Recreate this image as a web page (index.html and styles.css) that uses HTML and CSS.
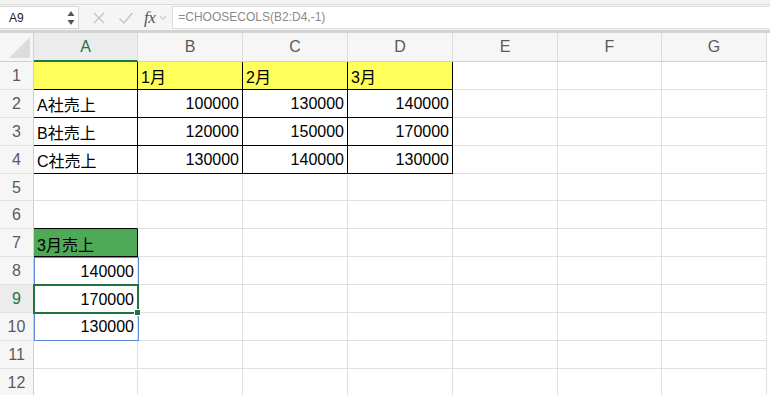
FILE: index.html
```html
<!DOCTYPE html>
<html lang="ja">
<head>
  <meta charset="UTF-8">
  <title>CHOOSECOLS</title>
  <link rel="stylesheet" href="styles.css">
</head>
<body>

  <!-- Toolbar strip -->
  <div class="top-strip"></div>

  <!-- Formula bar -->
  <div class="formula-bar">
    <div class="name-box">
      <span>A9</span>
      <svg class="spin" width="8" height="16" viewBox="0 0 8 16">
        <path d="M4 1 L7.5 6 L0.5 6 Z" fill="#555"/>
        <path d="M4 15 L7.5 10 L0.5 10 Z" fill="#555"/>
      </svg>
    </div>
    <svg class="fb-icon" width="14" height="14" viewBox="0 0 14 14">
      <path d="M2 2 L12 12 M12 2 L2 12" stroke="#c4c4c4" stroke-width="1.4" fill="none"/>
    </svg>
    <svg class="fb-icon" width="16" height="14" viewBox="0 0 16 14">
      <path d="M1.5 7.5 L6 12 L14.5 2" stroke="#c4c4c4" stroke-width="1.4" fill="none"/>
    </svg>
    <span class="fx">fx</span>
    <svg class="chev" width="8" height="6" viewBox="0 0 8 6">
      <path d="M1 1 L4 4.5 L7 1" stroke="#bbb" stroke-width="1" fill="none"/>
    </svg>
    <div class="formula-input">=CHOOSECOLS(B2:D4,-1)</div>
  </div>
  <div class="bar-sep"></div>

  <!-- Sheet -->
  <div class="sheet">
    <div class="row head-row">
      <div class="corner"><div class="tri"></div></div>
      <div class="col-head sel">A</div>
      <div class="col-head">B</div>
      <div class="col-head">C</div>
      <div class="col-head">D</div>
      <div class="col-head">E</div>
      <div class="col-head">F</div>
      <div class="col-head">G</div>
    </div>

    <div class="row">
      <div class="row-head">1</div>
      <div class="c b yellow"></div>
      <div class="c b yellow">1月</div>
      <div class="c b yellow">2月</div>
      <div class="c b yellow">3月</div>
      <div class="c"></div><div class="c"></div><div class="c"></div>
    </div>
    <div class="row">
      <div class="row-head">2</div>
      <div class="c b">A社売上</div>
      <div class="c b num">100000</div>
      <div class="c b num">130000</div>
      <div class="c b num">140000</div>
      <div class="c"></div><div class="c"></div><div class="c"></div>
    </div>
    <div class="row">
      <div class="row-head">3</div>
      <div class="c b">B社売上</div>
      <div class="c b num">120000</div>
      <div class="c b num">150000</div>
      <div class="c b num">170000</div>
      <div class="c"></div><div class="c"></div><div class="c"></div>
    </div>
    <div class="row">
      <div class="row-head">4</div>
      <div class="c b">C社売上</div>
      <div class="c b num">130000</div>
      <div class="c b num">140000</div>
      <div class="c b num">130000</div>
      <div class="c"></div><div class="c"></div><div class="c"></div>
    </div>
    <div class="row">
      <div class="row-head">5</div>
      <div class="c"></div><div class="c"></div><div class="c"></div><div class="c"></div>
      <div class="c"></div><div class="c"></div><div class="c"></div>
    </div>
    <div class="row">
      <div class="row-head">6</div>
      <div class="c bb"></div><div class="c"></div><div class="c"></div><div class="c"></div>
      <div class="c"></div><div class="c"></div><div class="c"></div>
    </div>
    <div class="row">
      <div class="row-head">7</div>
      <div class="c b green">3月売上</div><div class="c"></div><div class="c"></div><div class="c"></div>
      <div class="c"></div><div class="c"></div><div class="c"></div>
    </div>
    <div class="row">
      <div class="row-head">8</div>
      <div class="c num">140000</div><div class="c"></div><div class="c"></div><div class="c"></div>
      <div class="c"></div><div class="c"></div><div class="c"></div>
    </div>
    <div class="row">
      <div class="row-head sel">9</div>
      <div class="c num">170000</div><div class="c"></div><div class="c"></div><div class="c"></div>
      <div class="c"></div><div class="c"></div><div class="c"></div>
    </div>
    <div class="row">
      <div class="row-head">10</div>
      <div class="c num">130000</div><div class="c"></div><div class="c"></div><div class="c"></div>
      <div class="c"></div><div class="c"></div><div class="c"></div>
    </div>
    <div class="row">
      <div class="row-head">11</div>
      <div class="c"></div><div class="c"></div><div class="c"></div><div class="c"></div>
      <div class="c"></div><div class="c"></div><div class="c"></div>
    </div>
    <div class="row">
      <div class="row-head">12</div>
      <div class="c"></div><div class="c"></div><div class="c"></div><div class="c"></div>
      <div class="c"></div><div class="c"></div><div class="c"></div>
    </div>

    <!-- spill range + active cell -->
    <div class="spill-range"></div>
    <div class="active-cell"><div class="handle"></div></div>
  </div>

</body>
</html>
```

FILE: styles.css
```css
/* Global */
body {
  margin: 0;
  background: #fff;
  font-family: "Liberation Sans", "Noto Sans CJK JP", sans-serif;
  color: #000;
  overflow: hidden;
}

/* Toolbar strip */
.top-strip {
  height: 4px;
  background: #f3f3f3;
  border-bottom: 1px solid #dcdcdc;
}

/* Formula bar */
.formula-bar {
  height: 25px;
  background: #f5f5f5;
  display: flex;
  align-items: center;
}

.name-box {
  width: 79px;
  height: 23px;
  box-sizing: border-box;
  background: #fff;
  border: 1px solid #d6d6d6;
  border-left: none;
  display: flex;
  align-items: center;
  justify-content: space-between;
  padding: 0 3px 0 9px;
  font-size: 12px;
  color: #222;
}

.fb-icon {
  margin-left: 13px;
}

.fb-icon + .fb-icon {
  margin-left: 12px;
}

.fx {
  margin-left: 10px;
  font-family: "Liberation Serif", serif;
  font-style: italic;
  font-size: 17px;
  color: #555;
  letter-spacing: -0.5px;
}

.chev {
  margin-left: 4px;
}

.formula-input {
  flex: 1;
  margin-left: 5px;
  height: 23px;
  box-sizing: border-box;
  background: #fff;
  border: 1px solid #dedede;
  border-right: none;
  padding-left: 5px;
  font-size: 12px;
  line-height: 21px;
  color: #8a8a8a;
}

.bar-sep {
  height: 3px;
  background: #d3d3d3;
}

/* Sheet grid */
.sheet {
  position: relative;
}

.row {
  display: grid;
  grid-template-columns: 34px 104px 105px 105px 105px 105px 104px 105px;
  height: 27.9px;
}

.head-row {
  height: 29px;
}

.corner {
  position: relative;
  background: #f6f6f6;
  border-right: 1px solid #cfcfcf;
  border-bottom: 1px solid #cfcfcf;
  box-sizing: border-box;
}

.tri {
  position: absolute;
  right: 3px;
  bottom: 3px;
  width: 21px;
  height: 21px;
  background: #dcdcdc;
  clip-path: polygon(100% 0, 100% 100%, 0 100%);
}

.col-head {
  background: #f6f6f6;
  border-right: 1px solid #dcdcdc;
  border-bottom: 1px solid #cfcfcf;
  box-sizing: border-box;
  display: flex;
  align-items: center;
  justify-content: center;
  font-size: 16px;
  color: #5a5a5a;
}

.col-head.sel {
  background: #ececec;
  color: #217346;
  border-bottom: 2px solid #217346;
}

.row-head {
  background: #f6f6f6;
  border-right: 1px solid #cfcfcf;
  border-bottom: 1px solid #e2e2e2;
  box-sizing: border-box;
  display: flex;
  align-items: center;
  justify-content: center;
  font-size: 16px;
  color: #5a5a5a;
  padding-top: 1px;
}

.row-head.sel {
  background: #ececec;
  color: #217346;
}

/* Cells */
.c {
  border-right: 1px solid #e0e0e0;
  border-bottom: 1px solid #e0e0e0;
  box-sizing: border-box;
  display: flex;
  align-items: center;
  padding: 2px 3px 0 3px;
  font-size: 16px;
  white-space: nowrap;
}

.c.num {
  justify-content: flex-end;
}

.c.b {
  border-right-color: #000;
  border-bottom-color: #000;
}

.c.bb {
  border-bottom-color: #000;
}

.yellow {
  background: #ffff5b;
}

.green {
  background: #4eaa57;
}

/* Overlays */
.spill-range {
  position: absolute;
  left: 34px;
  top: 224px;
  width: 105px;
  height: 84px;
  box-sizing: border-box;
  border: 1px solid #5b8ad8;
}

.active-cell {
  position: absolute;
  left: 33px;
  top: 251px;
  width: 106px;
  height: 30px;
  box-sizing: border-box;
  border: 2px solid #217346;
}

.handle {
  position: absolute;
  right: -4px;
  bottom: -4px;
  width: 5px;
  height: 5px;
  background: #217346;
  border: 1px solid #fff;
}
```
